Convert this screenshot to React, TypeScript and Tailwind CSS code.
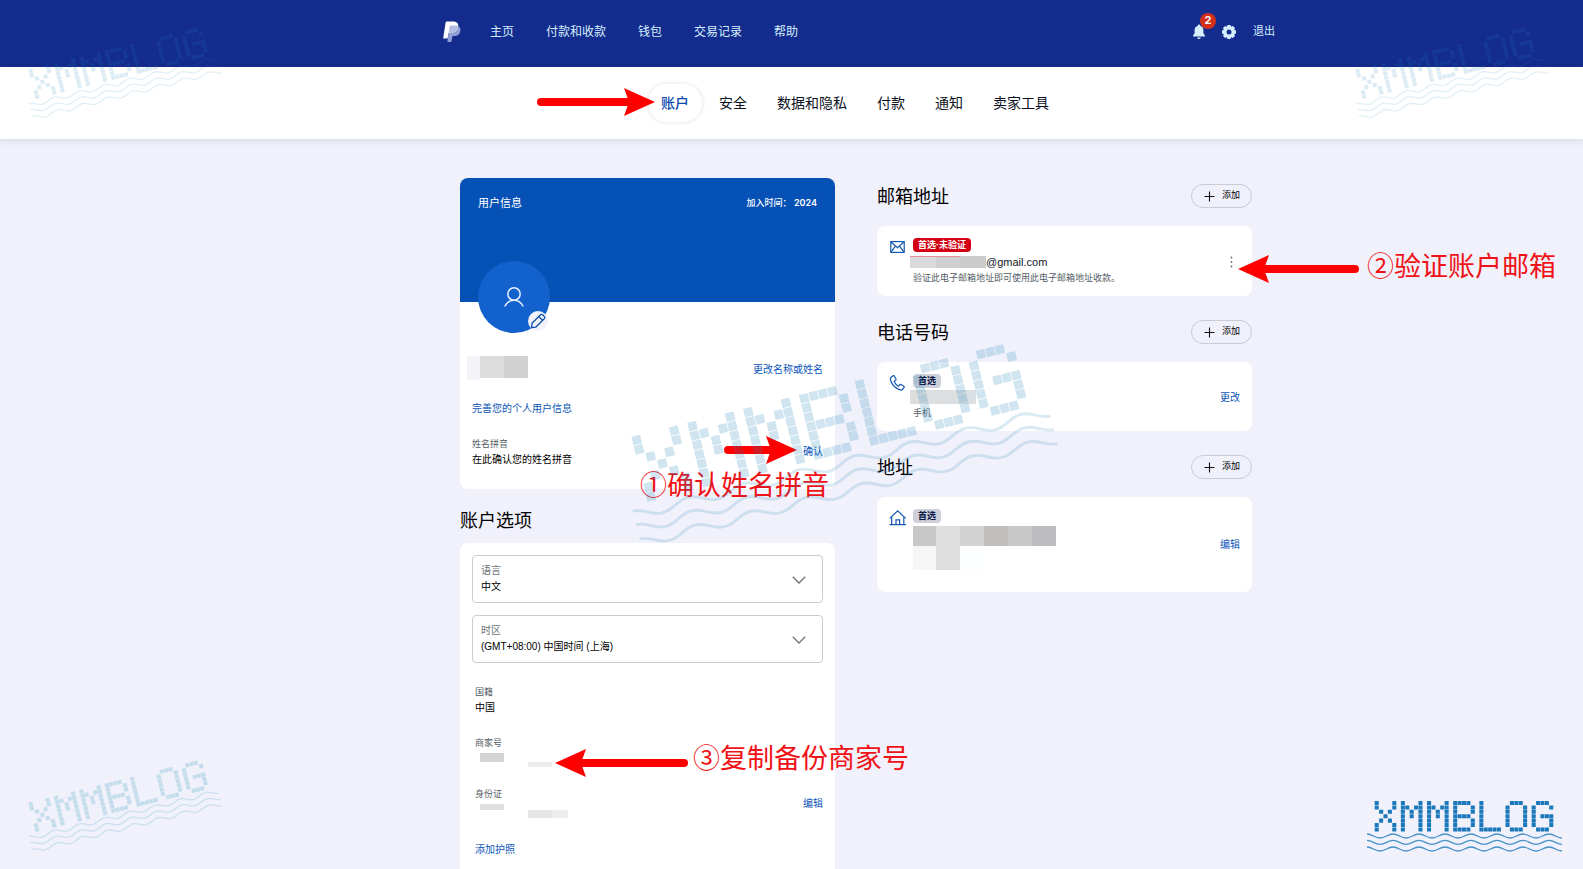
import type { ReactNode } from 'react'
import clsx from 'clsx'

const navItems = ['主页', '付款和收款', '钱包', '交易记录', '帮助']
const tabs = ['账户', '安全', '数据和隐私', '付款', '通知', '卖家工具']

// 5x7 dot matrix used by the blog logo
const logoDots = [
  ['10001', '10001', '01010', '00100', '01010', '10001', '10001'],
  ['10001', '11011', '10101', '10101', '10001', '10001', '10001'],
  ['10001', '11011', '10101', '10101', '10001', '10001', '10001'],
  ['11110', '10001', '10001', '11110', '10001', '10001', '11110'],
  ['10000', '10000', '10000', '10000', '10000', '10000', '11111'],
  ['01110', '10001', '10001', '10001', '10001', '10001', '01110'],
  ['01110', '10001', '10000', '10111', '10001', '10001', '01110'],
]

const wave = (y: number) => {
  let d = `M0 ${y - 6}`
  for (let i = 0; i < 15; i++) {
    const from = i % 2 === 0 ? y - 6 : y + 6
    const to = i % 2 === 0 ? y + 6 : y - 6
    const x = i * 39
    d += ` C${x + 16} ${from} ${x + 23} ${to} ${x + 39} ${to}`
  }
  return d
}

function BlogLogo({ className }: { className?: string }) {
  return (
    <svg viewBox="0 0 588 152" role="img" aria-label="XMMBLOG" className={clsx('pointer-events-none absolute', className)}>
      <g fill="currentColor">
        {logoDots.map((rows, l) =>
          rows.map((row, r) =>
            row.split('').map((dot, c) =>
              dot === '1' ? (
                <rect key={`${l}-${r}-${c}`} x={23 + l * 78.5 + c * 13.2} y={r * 13.2} width="12.2" height="12.2" rx="1" />
              ) : null
            )
          )
        )}
      </g>
      <g fill="none" stroke="currentColor" strokeOpacity="0.8" strokeWidth="4">
        <path d={wave(105)} />
        <path d={wave(124)} />
        <path d={wave(144)} />
      </g>
    </svg>
  )
}

function Arrow({ width, flip }: { width: number; flip?: boolean }) {
  return (
    <svg width={width} height="28" viewBox={`0 0 ${width} 28`} aria-hidden="true" className={clsx('shrink-0', flip && '-scale-x-100')}>
      <path d={`M4 14H${width - 22}`} stroke="#ff0000" strokeWidth="8" strokeLinecap="round" />
      <path d={`M${width - 31} 0L${width} 14L${width - 31} 28L${width - 26} 14Z`} fill="#ff0000" />
    </svg>
  )
}

function Note({ children }: { children: ReactNode }) {
  return <span className="text-[27px] leading-8 whitespace-nowrap text-[#f01216]">{children}</span>
}

function PayPalLogo() {
  return (
    <svg width="18" height="22" viewBox="0 0 18 22" aria-hidden="true">
      <path
        d="M15.3 5.2C17.2 6.3 17.8 8 17.3 10.3C16.6 13.6 14.3 15.1 11.2 15.1H10.1C9.6 15.1 9.3 15.4 9.2 15.9L8.5 20.2C8.4 20.7 8.1 21 7.6 21H4.3L6.3 8Z"
        fill="#8f9fd6"
      />
      <path
        d="M3.6 0.6H9.6C13.3 0.6 15.9 2.2 15.2 6.1C14.6 9.8 12 11.6 8.4 11.6H6.4C5.9 11.6 5.6 11.9 5.5 12.4L4.6 17.6H0.6C0.3 17.6 0.1 17.4 0.2 17L2.6 1.4C2.7 0.9 3.1 0.6 3.6 0.6Z"
        fill="#fff"
      />
      <path
        d="M15.2 5.1C13.9 4.5 12.2 4.5 10.6 4.5H7.6C7.1 4.5 6.8 4.8 6.7 5.3L5.6 12.1C5.8 11.8 6 11.6 6.4 11.6H8.4C12 11.6 14.6 9.8 15.2 6.1Z"
        fill="#b4bee5"
      />
    </svg>
  )
}

function BellIcon() {
  return (
    <svg width="12" height="16" viewBox="0 0 12 16" fill="#d5effc" aria-hidden="true">
      <path d="M6 0.5C6.7 0.5 7.2 1 7.2 1.8C9.2 2.4 10.4 4 10.4 6.2V9.2L12 11.6V12.6H0V11.6L1.6 9.2V6.2C1.6 4 2.8 2.4 4.8 1.8C4.8 1 5.3 0.5 6 0.5Z" />
      <path d="M4.2 13.4H7.8C7.6 14.4 6.9 14.9 6 14.9C5.1 14.9 4.4 14.4 4.2 13.4Z" />
    </svg>
  )
}

function GearIcon() {
  return (
    <svg width="14" height="14" viewBox="0 0 14 14" aria-hidden="true">
      <g fill="#d5effc">
        <rect x="5" y="0" width="4" height="14" rx="1.2" />
        <rect x="5" y="0" width="4" height="14" rx="1.2" transform="rotate(45 7 7)" />
        <rect x="5" y="0" width="4" height="14" rx="1.2" transform="rotate(90 7 7)" />
        <rect x="5" y="0" width="4" height="14" rx="1.2" transform="rotate(135 7 7)" />
        <circle cx="7" cy="7" r="5.8" />
      </g>
      <circle cx="7" cy="7" r="2.5" fill="#142c8e" />
    </svg>
  )
}

function Section({ title, children }: { title: string; children: ReactNode }) {
  return (
    <section>
      <div className="flex h-6 items-center justify-between">
        <h2 className="pt-[2px] text-[18px] leading-6">{title}</h2>
        <button className="flex h-6 w-[61px] items-center justify-end gap-[7px] rounded-full border border-[#c9cbd4] pr-[11px] text-[9px]">
          <svg width="11" height="11" viewBox="0 0 11 11" stroke="#111" strokeWidth="1.1" aria-hidden="true">
            <path d="M5.5 0.5V10.5M0.5 5.5H10.5" />
          </svg>
          添加
        </button>
      </div>
      {children}
    </section>
  )
}

function Card({ icon, children, action }: { icon: ReactNode; children: ReactNode; action: ReactNode }) {
  return (
    <div className="relative mt-[18px] flex gap-2 rounded-lg bg-white px-3 pt-3">
      <div className="w-4 shrink-0">{icon}</div>
      <div className="flex-1">{children}</div>
      {action}
    </div>
  )
}

function Badge({ children, danger }: { children: ReactNode; danger?: boolean }) {
  return (
    <span
      className={clsx(
        'flex h-[14px] w-fit items-center rounded px-[5px] text-[9px] leading-none font-bold',
        danger ? 'bg-[#d20012] text-white' : 'bg-[#cdd0d9] text-[#0a1747]'
      )}
    >
      {children}
    </span>
  )
}

function SelectBox({ id, label, value }: { id: string; label: string; value: string }) {
  return (
    <div className="relative rounded border border-[#c9cccf] px-2 pt-[7px] pb-[7px]">
      <label htmlFor={id} className="block text-[10px] leading-4 text-[#6c7378]">
        {label}
      </label>
      <select id={id} defaultValue={value} className="block h-4 w-full appearance-none bg-transparent p-0 text-[10px] leading-4">
        <option>{value}</option>
      </select>
      <svg width="14" height="8" viewBox="0 0 14 8" fill="none" stroke="#6c7378" strokeWidth="1.3" aria-hidden="true" className="pointer-events-none absolute top-5 right-4">
        <path d="M0.8 0.8L7 7L13.2 0.8" />
      </svg>
    </div>
  )
}

export default function App() {
  return (
    <div className="relative flex min-h-screen flex-col overflow-hidden bg-[#f0f1fa] font-['Liberation_Sans','Noto_Sans_CJK_SC',sans-serif] text-black">
      <header className="h-[67px] bg-[#142c8e] pb-1 pl-[135px] text-[#d5effc]">
        <div className="mx-auto flex h-full max-w-[832px] items-center">
          <a href="#" aria-label="PayPal">
            <PayPalLogo />
          </a>
          <nav className="ml-[29px] flex gap-8 text-xs">
            {navItems.map(item => (
              <a key={item} href="#">
                {item}
              </a>
            ))}
          </nav>
          <div className="ml-auto flex items-center gap-[17px] text-[11px]">
            <button aria-label="2" className="relative">
              <BellIcon />
              <span className="absolute -top-[11px] left-[7px] flex size-4 items-center justify-center rounded-full bg-[#d3311a] font-['Inter',sans-serif] text-[11px] leading-none font-bold text-white">
                2
              </span>
            </button>
            <a href="#">
              <GearIcon />
            </a>
            <a href="#">退出</a>
          </div>
        </div>
      </header>

      <nav className="flex h-[72px] items-center justify-center gap-1 bg-white pl-[127px] text-sm text-[#0a1020] shadow-[0_1px_6px_2px_rgba(0,20,60,0.08)]">
        {tabs.map((tab, i) => (
          <div key={tab} className="relative">
            <a
              href="#"
              className={clsx(
                'flex h-[38px] items-center rounded-full px-[13px]',
                i === 0 && 'font-medium text-[#0a49b0] shadow-[0_0_3px_2px_rgba(0,0,0,0.06)]'
              )}
            >
              {tab}
            </a>
            {i === 0 && (
              <div className="absolute top-1 right-[47px]">
                <Arrow width={118} />
              </div>
            )}
          </div>
        ))}
      </nav>

      <main className="flex flex-1 pt-[39px] pl-[129px]">
        <div className="mx-auto flex w-full max-w-[792px] gap-[42px]">
          <div className="flex flex-1 flex-col">
            <section className="rounded-lg bg-white pb-[21px]">
              <div className="relative flex h-[124px] justify-between rounded-t-lg bg-[#0551b5] px-[18px] pt-4 leading-[18px] text-white">
                <h2 className="text-[11px]">用户信息</h2>
                <p className="text-[9px] font-medium">
                  加入时间： <span className="font-['Inter',sans-serif] font-semibold">2024</span>
                </p>
                <div className="absolute top-[83px] left-[18px] flex size-18 items-center justify-center rounded-full bg-[#1361cd]">
                  <svg width="20" height="20" viewBox="0 0 20 20" fill="none" stroke="#e6f3ff" strokeWidth="1.5" aria-hidden="true">
                    <circle cx="10" cy="7" r="6.2" />
                    <path d="M0.8 19.5C2.6 15.6 5.8 13.2 10 13.2C14.2 13.2 17.4 15.6 19.2 19.5" />
                  </svg>
                  <button aria-label="编辑" className="absolute right-[2px] bottom-[2px] flex size-5 items-center justify-center rounded-full bg-[#f0f1fa]">
                    <svg width="16" height="16" viewBox="0 0 18 18" fill="none" stroke="#0a4ba8" strokeWidth="1.4" strokeLinejoin="round" aria-hidden="true">
                      <path d="M1.8 16.4L2.3 11.6L11.6 2.2C12.3 1.5 13.4 1.4 14.2 2L16 3.8C16.7 4.5 16.7 5.6 16 6.4L6.7 15.8Z" />
                      <path d="M9.8 4L14.2 8.3" />
                    </svg>
                  </button>
                </div>
              </div>
              <div className="px-3 pt-[54px] text-[10px] leading-4">
                <div className="flex h-6 items-end justify-between">
                  <div className="-ml-[5px] flex h-6">
                    <span className="w-[13px] bg-[#f3f3f8]" />
                    <span className="h-[22px] w-6 bg-[#dcdcdc]" />
                    <span className="h-[22px] w-6 bg-[#d1d1d2]" />
                  </div>
                  <a href="#" className="pb-[2px] text-[#0b55b8]">
                    更改名称或姓名
                  </a>
                </div>
                <a href="#" className="mt-[21px] block w-fit text-[#0b55b8]">
                  完善您的个人用户信息
                </a>
                <div className="relative mt-[19px] flex items-center justify-between">
                  <div>
                    <p className="text-[9px] text-[#545d66]">姓名拼音</p>
                    <p>在此确认您的姓名拼音</p>
                  </div>
                  <div className="flex items-start gap-[6px]">
                    <div className="-my-2">
                      <Arrow width={73} />
                    </div>
                    <a href="#" className="text-[#0b55b8]">
                      确认
                    </a>
                  </div>
                  <div className="absolute top-[34px] -right-[6px]">
                    <Note>①确认姓名拼音</Note>
                  </div>
                </div>
              </div>
            </section>

            <h2 className="mt-5 mb-[10px] text-[18px] leading-6">账户选项</h2>
            <section className="flex-1 rounded-t-lg bg-white p-3 text-[10px] leading-4">
              <div className="flex flex-col gap-3">
                <SelectBox id="language" label="语言" value="中文" />
                <SelectBox id="timezone" label="时区" value="(GMT+08:00) 中国时间 (上海)" />
              </div>
              <div className="mt-[21px] pl-[3px]">
                <p className="text-[9px] text-[#545d66]">国籍</p>
                <p>中国</p>
              </div>
              <div className="mt-[19px] pl-[3px]">
                <p className="text-[9px] text-[#545d66]">商家号</p>
                <div className="relative flex h-4 pl-[5px]">
                  <span className="mt-[2px] h-[9px] w-6 bg-[#d4d4d4]" />
                  <span className="ml-6 h-[5px] w-6 self-end bg-[#ebebeb]" />
                  <div className="absolute -top-[10px] left-20 flex items-center gap-[5px]">
                    <div className="pt-2">
                      <Arrow width={133} flip />
                    </div>
                    <Note>③复制备份商家号</Note>
                  </div>
                </div>
              </div>
              <div className="mt-[19px] flex items-end justify-between pl-[3px]">
                <div>
                  <p className="text-[9px] text-[#545d66]">身份证</p>
                  <div className="flex h-4 pl-[5px]">
                    <span className="mt-[2px] h-[6px] w-6 bg-[#dfdfdf]" />
                    <span className="ml-6 h-2 w-6 self-end bg-[#e6e6e6]" />
                    <span className="h-2 w-4 self-end bg-[#eeeeee]" />
                  </div>
                </div>
                <a href="#" className="pb-[6px] text-[#0b55b8]">
                  编辑
                </a>
              </div>
              <a href="#" className="mt-6 ml-[3px] block w-fit text-[#0b55b8]">
                添加护照
              </a>
            </section>
          </div>

          <div className="flex flex-1 flex-col gap-6 pt-[6px]">
            <Section title="邮箱地址">
              <Card
                icon={
                  <svg width="16" height="16" viewBox="0 0 16 16" fill="none" stroke="#1458b4" strokeWidth="1.2" aria-hidden="true">
                    <rect x="1.8" y="3.6" width="13.4" height="10.8" />
                    <path d="M1.8 3.8L8.5 9.6L15.2 3.8M2 14.2L6.4 8.2M15 14.2L10.6 8.2" />
                  </svg>
                }
                action={
                  <>
                    <button aria-label="更多" className="mt-4 mr-[7px] h-4 w-[3px] self-start">
                      <svg width="3" height="12" viewBox="0 0 3 12" fill="#5f6b7a" aria-hidden="true">
                        <circle cx="1.5" cy="1.5" r="0.9" />
                        <circle cx="1.5" cy="6" r="0.9" />
                        <circle cx="1.5" cy="10.5" r="0.9" />
                      </svg>
                    </button>
                    <div className="absolute top-[25px] left-full -ml-[14px] flex items-center gap-2">
                      <div className="pt-[3px]">
                        <Arrow width={121} flip />
                      </div>
                      <Note>②验证账户邮箱</Note>
                    </div>
                  </>
                }
              >
                <Badge danger>首选·未验证</Badge>
                <div className="mt-[2px] flex h-4 items-center text-[11px] text-[#14181f]">
                  <span className="-ml-[3px] flex h-3">
                    <span className="w-[26px] border-t border-[#e88f93] bg-[#dadadc]" />
                    <span className="w-6 border-t border-[#e88f93] bg-[#cfcfd1]" />
                    <span className="w-[26px] bg-[#cbcbcc]" />
                  </span>
                  @gmail.com
                </div>
                <p className="pb-[10px] text-[9px] leading-4 text-[#545d66]">验证此电子邮箱地址即可使用此电子邮箱地址收款。</p>
              </Card>
            </Section>

            <Section title="电话号码">
              <Card
                icon={
                  <svg width="16" height="18" viewBox="0 0 16 18" fill="none" stroke="#1458b4" strokeWidth="1.2" strokeLinejoin="round" aria-hidden="true">
                    <path d="M2.2 3.2L4 1.7C4.4 1.4 5 1.5 5.2 1.9L6.9 5C7.1 5.4 7 5.9 6.6 6.2L5.6 6.9C5.2 7.2 5.2 7.7 5.4 8.1C6.2 9.7 7.4 11 9 11.9C9.4 12.1 9.9 12 10.2 11.6L10.9 10.7C11.2 10.3 11.7 10.2 12.1 10.5L14.8 12.3C15.2 12.6 15.3 13.1 15 13.5L13.8 15.1C13.2 15.9 12.2 16.2 11.2 15.9C6.5 14.4 2.9 10.6 1.5 6C1.2 5 1.4 3.9 2.2 3.2Z" />
                  </svg>
                }
                action={
                  <a href="#" className="mt-4 self-start text-[10px] leading-4 text-[#0b55b8]">
                    更改
                  </a>
                }
              >
                <Badge>首选</Badge>
                <span className="mt-[2px] -ml-[3px] block h-[14px] w-[66px] bg-linear-to-r from-[#dedede] to-[#d9dfe3]" />
                <p className="pt-px pb-[10px] text-[9px] leading-4 text-[#545d66]">手机</p>
              </Card>
            </Section>

            <Section title="地址">
              <Card
                icon={
                  <svg width="18" height="18" viewBox="0 0 18 18" fill="none" stroke="#1458b4" strokeWidth="1.2" aria-hidden="true">
                    <path d="M0.5 15.6H17M2.7 15.4V8M14.8 15.4V8M0.8 9.4L8.7 1.8L16.7 9.4M7 15.4V10.8H10.6V15.4" />
                  </svg>
                }
                action={
                  <a href="#" className="mt-7 self-start text-[10px] leading-4 text-[#0b55b8]">
                    编辑
                  </a>
                }
              >
                <Badge>首选</Badge>
                <div className="mt-[3px] flex h-5">
                  <span className="w-[23px] bg-[#c8c8c9]" />
                  <span className="w-6 bg-[#dedede]" />
                  <span className="w-6 bg-[#d3d3d3]" />
                  <span className="w-6 bg-[#c0bfbe]" />
                  <span className="w-6 bg-[#c8c8c8]" />
                  <span className="w-6 bg-[#bebec2]" />
                </div>
                <div className="mb-[22px] flex h-6">
                  <span className="w-[23px] bg-[#f6f6f6]" />
                  <span className="w-6 bg-[#dedede]" />
                  <span className="w-6 bg-[#fbfdff]" />
                </div>
              </Card>
            </Section>
          </div>
        </div>
      </main>

      <BlogLogo className="top-[47px] left-6 w-[196px] -rotate-14 text-[#1b82ba] opacity-15" />
      <BlogLogo className="top-[47px] right-9 w-[196px] -rotate-14 text-[#1b82ba] opacity-15" />
      <BlogLogo className="bottom-[39px] left-6 w-[196px] -rotate-14 text-[#1b8fba] opacity-20" />
      <BlogLogo className="top-[387px] left-1/2 ml-[-170px] w-[431px] -rotate-14 text-[#1b82ba] opacity-20" />
      <BlogLogo className="right-5 bottom-[18px] w-[196px] text-[#1b78ba]" />
    </div>
  )
}
